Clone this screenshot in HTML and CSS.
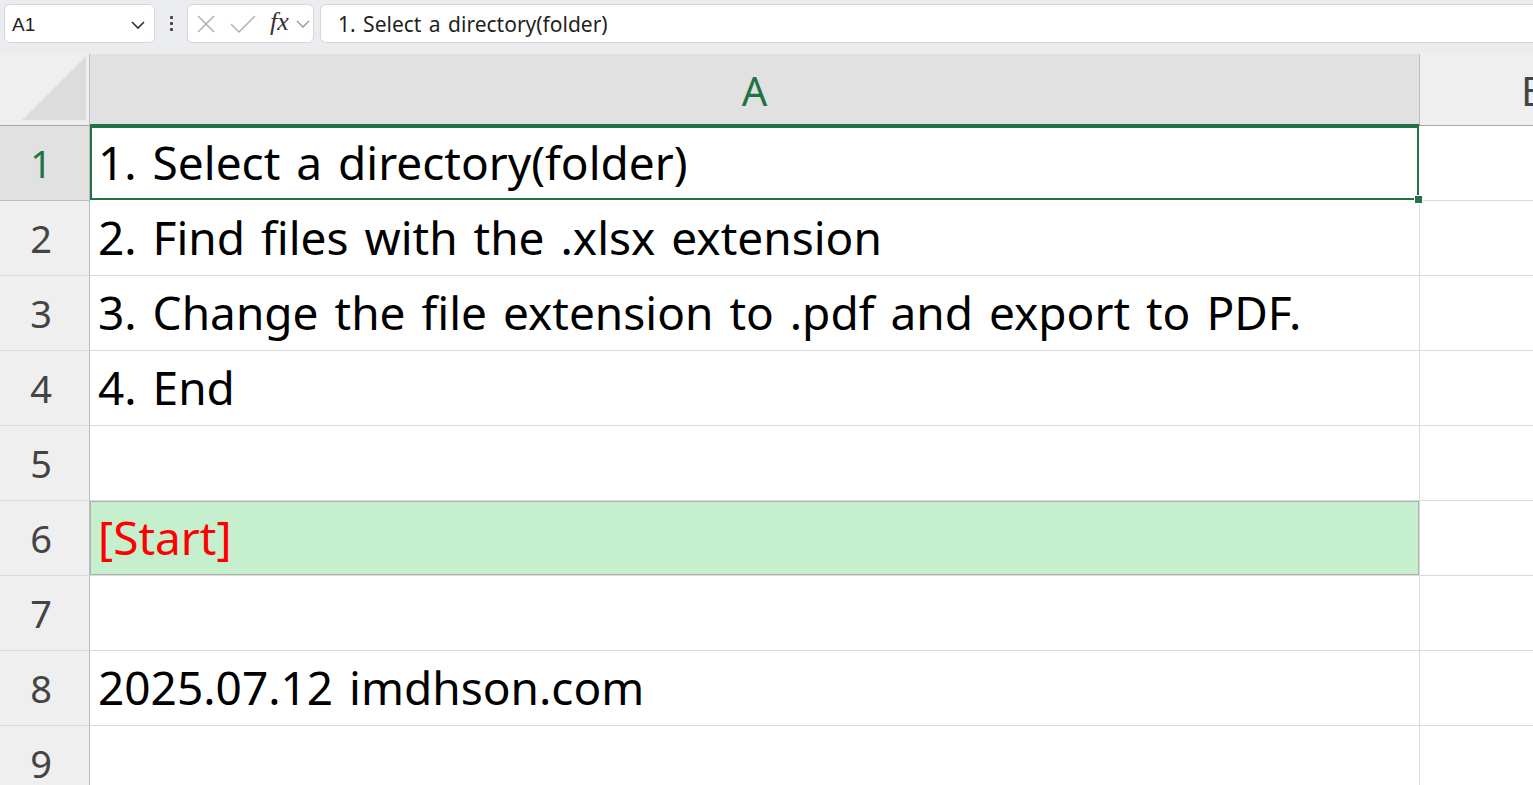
FILE: index.html
```html
<!DOCTYPE html>
<html lang="en">
<head>
<meta charset="utf-8">
<title>Sheet</title>
<link rel="stylesheet" href="styles.css">
</head>
<body>
<div class="app">
  <div class="toolbar">
    <div class="namebox">
      <span class="name">A1</span>
      <svg class="chev" width="16" height="10" viewBox="0 0 16 10"><path d="M2 2 L8 8 L14 2" fill="none" stroke="#333" stroke-width="1.6"/></svg>
    </div>
    <div class="vdots"><i></i><i></i><i></i></div>
    <div class="fxbox">
      <svg width="20" height="20" viewBox="0 0 20 20"><path d="M2 2 L18 18 M18 2 L2 18" stroke="#b0b0b0" stroke-width="1.5" fill="none"/></svg>
      <svg width="26" height="20" viewBox="0 0 26 20"><path d="M1 10 L9 18 L25 2" stroke="#b0b0b0" stroke-width="1.5" fill="none"/></svg>
      <span class="fx">fx</span>
      <svg width="14" height="10" viewBox="0 0 14 10"><path d="M1 2 L7 8 L13 2" fill="none" stroke="#999" stroke-width="1.4"/></svg>
    </div>
    <div class="formula">1. Select a directory(folder)</div>
  </div>
  <div class="grid">
    <div class="hrow">
      <div class="corner"><div class="tri"></div></div>
      <div class="colhead sel">A</div>
      <div class="colhead colb">B</div>
    </div>
    <div class="row">
      <div class="rowhead sel">1</div>
      <div class="cell active">1. Select a directory(folder)<span class="handle"></span></div>
      <div class="cellb"></div>
    </div>
    <div class="row">
      <div class="rowhead">2</div>
      <div class="cell">2. Find files with the .xlsx extension</div>
      <div class="cellb"></div>
    </div>
    <div class="row">
      <div class="rowhead">3</div>
      <div class="cell">3. Change the file extension to .pdf and export to PDF.</div>
      <div class="cellb"></div>
    </div>
    <div class="row">
      <div class="rowhead">4</div>
      <div class="cell">4. End</div>
      <div class="cellb"></div>
    </div>
    <div class="row">
      <div class="rowhead">5</div>
      <div class="cell"></div>
      <div class="cellb"></div>
    </div>
    <div class="row">
      <div class="rowhead">6</div>
      <div class="cell start">[Start]</div>
      <div class="cellb"></div>
    </div>
    <div class="row">
      <div class="rowhead">7</div>
      <div class="cell"></div>
      <div class="cellb"></div>
    </div>
    <div class="row">
      <div class="rowhead">8</div>
      <div class="cell">2025.07.12 imdhson.com</div>
      <div class="cellb"></div>
    </div>
    <div class="row">
      <div class="rowhead">9</div>
      <div class="cell"></div>
      <div class="cellb"></div>
    </div>
  </div>
</div>
</body>
</html>
```

FILE: styles.css
```css
html, body {
  margin: 0;
  padding: 0;
  width: 1533px;
  height: 785px;
  overflow: hidden;
  background: #ffffff;
  font-family: "Noto Sans", "Open Sans", sans-serif;
}

.app {
  display: flex;
  flex-direction: column;
  width: 1533px;
  height: 785px;
  overflow: hidden;
}

.toolbar {
  height: 54px;
  flex: none;
  background: #eaecef;
  display: flex;
  align-items: flex-start;
  padding: 4px 0 0 4px;
  box-sizing: border-box;
}

.namebox {
  width: 151px;
  height: 39px;
  flex: none;
  box-sizing: border-box;
  background: #fff;
  border: 1px solid #d6d6d6;
  border-radius: 6px;
  display: flex;
  align-items: center;
  justify-content: space-between;
  padding: 2px 8px 0 7px;
}

.name {
  font-family: "Liberation Sans", Arial, sans-serif;
  font-size: 19px;
  color: #1f1f1f;
}

.vdots {
  width: 32px;
  height: 39px;
  flex: none;
  display: flex;
  flex-direction: column;
  align-items: center;
  justify-content: center;
  gap: 3px;
}

.vdots i {
  display: block;
  width: 3px;
  height: 3px;
  border-radius: 1px;
  background: #444;
}

.fxbox {
  width: 127px;
  height: 39px;
  flex: none;
  box-sizing: border-box;
  background: #fff;
  border: 1px solid #d6d6d6;
  border-radius: 6px;
  display: flex;
  align-items: center;
  padding: 0 0 0 8px;
  gap: 0;
}

.fxbox svg:nth-child(2) {
  margin-left: 14px;
}

.fx {
  font-family: "Liberation Serif", "Times New Roman", serif;
  font-style: italic;
  font-size: 26px;
  color: #333;
  margin-left: 14px;
  margin-right: 7px;
  line-height: 1;
  padding-bottom: 3px;
}

.formula {
  margin-left: 6px;
  flex: 1;
  height: 39px;
  box-sizing: border-box;
  background: #fff;
  border: 1px solid #d6d6d6;
  border-right: none;
  border-radius: 6px 0 0 6px;
  padding: 0 0 0 17px;
  display: flex;
  align-items: center;
  font-size: 21px;
  word-spacing: 2px;
  color: #1f1f1f;
}

.grid {
  flex: 1;
  display: flex;
  flex-direction: column;
}

.hrow {
  display: flex;
  height: 72px;
  flex: none;
}

.corner {
  width: 90px;
  flex: none;
  box-sizing: border-box;
  background: #efefef;
  border-right: 1px solid #bdbdbd;
  border-bottom: 1px solid #a8a8a8;
  display: flex;
  align-items: flex-end;
  justify-content: flex-end;
  padding: 0 3px 5px 0;
}

.tri {
  width: 0;
  height: 0;
  border-left: 64px solid transparent;
  border-bottom: 64px solid #dcdcdc;
}

.colhead {
  width: 1330px;
  flex: none;
  box-sizing: border-box;
  background: #efefef;
  border-right: 1px solid #bdbdbd;
  border-bottom: 1px solid #a8a8a8;
  display: flex;
  align-items: center;
  justify-content: center;
  font-size: 40px;
  color: #444;
  padding-top: 2px;
}

.colhead.colb {
  width: 220px;
  justify-content: flex-start;
  padding-left: 101px;
}

.colhead.sel {
  background: #e1e1e1;
  color: #217346;
  border-bottom: 2px solid #217346;
}

.row {
  display: flex;
  height: 75px;
  flex: none;
}

.rowhead {
  width: 90px;
  flex: none;
  box-sizing: border-box;
  background: #efefef;
  border-right: 1px solid #bdbdbd;
  border-bottom: 1px solid #dadada;
  display: flex;
  align-items: center;
  justify-content: center;
  font-size: 38px;
  color: #444;
  padding-right: 7px;
}

.rowhead.sel {
  background: #e1e1e1;
  color: #217346;
  border-bottom-color: #bdbdbd;
}

.cell {
  width: 1330px;
  flex: none;
  box-sizing: border-box;
  border-right: 1px solid #dadada;
  border-bottom: 1px solid #dadada;
  display: flex;
  align-items: center;
  padding: 0 0 2px 8px;
  font-size: 46px;
  word-spacing: 4px;
  color: #000;
  white-space: nowrap;
  position: relative;
}

.cell.active {
  box-shadow: inset 0 0 0 2px #217346;
  border-color: transparent;
}

.handle {
  position: absolute;
  right: -4px;
  bottom: -4px;
  width: 7px;
  height: 7px;
  background: #217346;
  border: 1px solid #fff;
  z-index: 2;
}

.cell.start {
  background: #c6efce;
  color: #ff0000;
  box-shadow: inset 0 0 0 1px #b0b0b0;
}

.cellb {
  flex: 1;
  border-bottom: 1px solid #dadada;
}
```
